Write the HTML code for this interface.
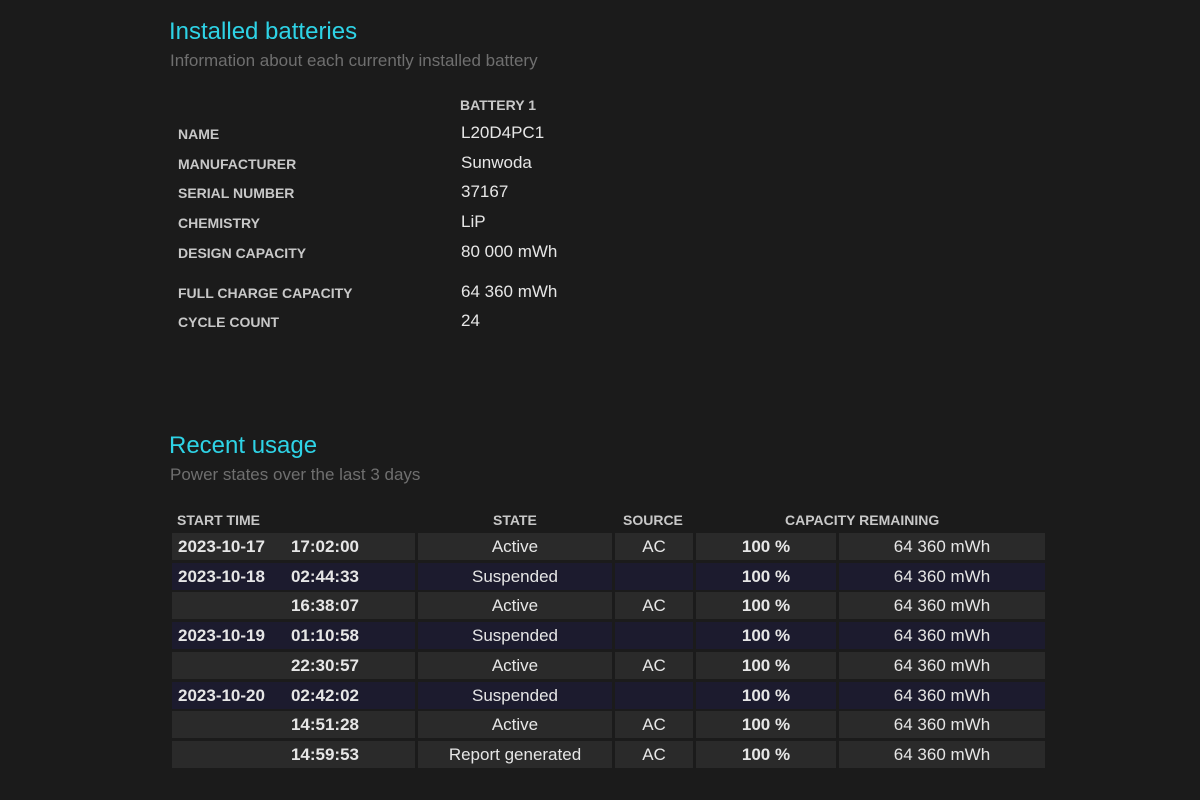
<!DOCTYPE html>
<html><head><style>
body{margin:0;width:1200px;height:800px;background:#1b1b1b;font-family:"Liberation Sans",sans-serif;color:#e0e0e0;position:relative;overflow:hidden}
.a{position:absolute;white-space:nowrap}
h1{position:absolute;margin:0;font-weight:normal;color:#2ed3e6;font-size:24px}
.sub{color:#6f6f6f;font-size:17px}
.lb{font-weight:bold;font-size:14px;color:#c8c8c8}
.v{font-size:17px;color:#e6e6e6}
.c{position:absolute;height:27px;line-height:27px;font-size:17px;color:#e6e6e6;white-space:nowrap}
.g{background:#2a2a2a}.p{background:#1c1b2e}
.b{font-weight:bold}
</style></head><body>
<h1 style="left:169px;top:18px">Installed batteries</h1>
<div class="a sub" style="left:170px;top:51px">Information about each currently installed battery</div>
<div class="a lb" style="left:460px;top:97px">BATTERY 1</div>
<div class="a lb" style="left:178px;top:126px">NAME</div><div class="a v" style="left:461px;top:123px">L20D4PC1</div>
<div class="a lb" style="left:178px;top:156px">MANUFACTURER</div><div class="a v" style="left:461px;top:153px">Sunwoda</div>
<div class="a lb" style="left:178px;top:185px">SERIAL NUMBER</div><div class="a v" style="left:461px;top:182px">37167</div>
<div class="a lb" style="left:178px;top:215px">CHEMISTRY</div><div class="a v" style="left:461px;top:212px">LiP</div>
<div class="a lb" style="left:178px;top:245px">DESIGN CAPACITY</div><div class="a v" style="left:461px;top:242px">80 000 mWh</div>
<div class="a lb" style="left:178px;top:285px">FULL CHARGE CAPACITY</div><div class="a v" style="left:461px;top:282px">64 360 mWh</div>
<div class="a lb" style="left:178px;top:314px">CYCLE COUNT</div><div class="a v" style="left:461px;top:311px">24</div>
<h1 style="left:169px;top:432px">Recent usage</h1>
<div class="a sub" style="left:170px;top:465px">Power states over the last 3 days</div>
<div class="a lb" style="left:177px;top:512px">START TIME</div>
<div class="a lb" style="left:493px;top:512px">STATE</div>
<div class="a lb" style="left:623px;top:512px">SOURCE</div>
<div class="a lb" style="left:785px;top:512px">CAPACITY REMAINING</div>
<div id="t"></div>
<script>
var R=[["g","2023-10-17","17:02:00","Active","AC"],["p","2023-10-18","02:44:33","Suspended",""],["g","","16:38:07","Active","AC"],["p","2023-10-19","01:10:58","Suspended",""],["g","","22:30:57","Active","AC"],["p","2023-10-20","02:42:02","Suspended",""],["g","","14:51:28","Active","AC"],["g","","14:59:53","Report generated","AC"]];
var h="";R.forEach(function(r,i){var y=533+i*29.7;var k=r[0];
h+='<div class="c '+k+'" style="left:172px;top:'+y+'px;width:243px"><span class="b" style="position:absolute;left:6px">'+r[1]+'</span><span class="b" style="position:absolute;right:56px">'+r[2]+'</span></div>';
h+='<div class="c '+k+'" style="left:418px;top:'+y+'px;width:194px;text-align:center">'+r[3]+'</div>';
h+='<div class="c '+k+'" style="left:615px;top:'+y+'px;width:78px;text-align:center">'+r[4]+'</div>';
h+='<div class="c '+k+' b" style="left:696px;top:'+y+'px;width:140px;text-align:center">100 %</div>';
h+='<div class="c '+k+'" style="left:839px;top:'+y+'px;width:206px;text-align:center">64 360 mWh</div>';});
document.getElementById("t").innerHTML=h;
</script>
</body></html>
